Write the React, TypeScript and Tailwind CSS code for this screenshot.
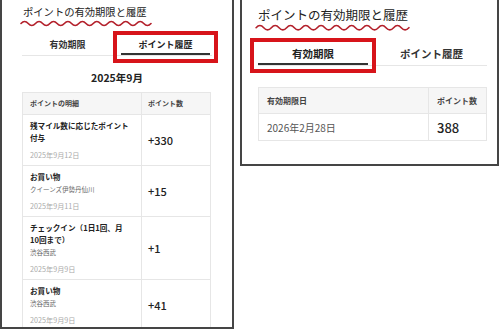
const font = "font-['Noto_Sans_CJK_JP','Noto_Sans',sans-serif]";

const Wave = ({ width, periods, amp }: { width: number; periods: number; amp: number }) => {
  const p = (width - 2) / periods;
  let d = `M1 ${amp + 1.5}`;
  for (let i = 0; i < periods; i++) {
    d += ` q${p / 4} ${-amp * 2} ${p / 2} 0 q${p / 4} ${amp * 2} ${p / 2} 0`;
  }
  return (
    <svg width={width} height={amp * 2 + 3} viewBox={`0 0 ${width} ${amp * 2 + 3}`} className="block">
      <path d={d} fill="none" stroke="#b3202b" strokeWidth="1.6" strokeLinecap="round" />
    </svg>
  );
};

type Entry = { title: string[]; shop?: string; date: string; pts: string };

const history: Entry[] = [
  { title: ["残マイル数に応じたポイント", "付与"], date: "2025年9月12日", pts: "+330" },
  { title: ["お買い物"], shop: "クイーンズ伊勢丹仙川", date: "2025年9月11日", pts: "+15" },
  { title: ["チェックイン（1日1回、月", "10回まで）"], shop: "渋谷西武", date: "2025年9月9日", pts: "+1" },
  { title: ["お買い物"], shop: "渋谷西武", date: "2025年9月9日", pts: "+41" },
];

const HistoryPanel = () => (
  <div className="w-[234px] h-[329px] shrink-0 border-x-2 border-b-2 border-[#454545] overflow-hidden bg-white">
    <div className="pl-[21px] pt-[5px] text-[10.3px] leading-[14px] text-[#222]">ポイントの有効期限と履歴</div>
    <div className="ml-[18px] mt-[1px]">
      <Wave width={132} periods={9} amp={2} />
    </div>

    <div className="ml-[20px] mt-[4px] w-[190px] flex items-end border-b border-[#e6e6e6]">
      <div className="flex-1 pr-[8px] pt-[8px] pb-[4px] text-center text-[9px] leading-[12px] font-bold text-[#333]">
        有効期限
      </div>
      <div className="w-[89px] mr-[2px] pb-[2px] text-center text-[9px] leading-[12px] font-bold text-[#222] border-b-2 border-[#333] outline-[4px] outline-solid outline-[#d7141a] outline-offset-[4px]">
        ポイント履歴
      </div>
    </div>

    <div className="mt-[15px] text-center text-[10.5px] leading-[14px] font-bold text-[#222]">2025年9月</div>

    <div className="mx-[20px] mt-[7px] w-[189px] border border-[#e6e6e6]">
      <div className="flex h-[22px] bg-[#f6f6f6] border-b border-[#e6e6e6] text-[7px] font-bold text-[#444]">
        <div className="w-[119px] pl-[7px] flex items-center border-r border-[#e6e6e6]">ポイントの明細</div>
        <div className="flex-1 pl-[6px] flex items-center">ポイント数</div>
      </div>
      {history.map((h, i) => (
        <div key={i} className="flex border-b border-[#e6e6e6]">
          <div className="w-[119px] pl-[7px] pt-[5px] pb-[4px] border-r border-[#e6e6e6]">
            {h.title.map((t) => (
              <div key={t} className="text-[7.6px] leading-[12px] font-bold text-[#222] whitespace-nowrap">
                {t}
              </div>
            ))}
            {h.shop && <div className="text-[6.5px] leading-[12px] text-[#666]">{h.shop}</div>}
            <div className="mt-[5px] text-[7.2px] leading-[12px] text-[#aaa]">{h.date}</div>
          </div>
          <div className="flex-1 pl-[6px] flex items-center text-[11px] font-medium text-[#222]">{h.pts}</div>
        </div>
      ))}
    </div>
  </div>
);

const ExpiryPanel = () => (
  <div className="ml-[6px] w-[259px] h-[166px] shrink-0 border-x-2 border-b-2 border-[#454545] bg-white">
    <div className="pl-[16px] pt-[6px] text-[12.5px] leading-[18px] text-[#222]">ポイントの有効期限と履歴</div>
    <div className="ml-[13px]">
      <Wave width={155} periods={10} amp={2.2} />
    </div>

    <div className="ml-[16px] mt-[15px] w-[229px] flex items-end border-b border-[#e6e6e6]">
      <div className="w-[110px] pt-[1px] pb-[2px] text-center text-[10.5px] leading-[14px] font-bold text-[#222] border-b-2 border-[#333] outline-[4px] outline-solid outline-[#d7141a] outline-offset-[4px]">
        有効期限
      </div>
      <div className="flex-1 pl-[8px] pt-[1px] pb-[4px] text-center text-[10.5px] leading-[14px] font-bold text-[#333]">
        ポイント履歴
      </div>
    </div>

    <div className="ml-[16px] mt-[21px] w-[229px] border border-[#e6e6e6]">
      <div className="flex h-[26px] bg-[#f6f6f6] border-b border-[#e6e6e6] text-[8px] font-bold text-[#444]">
        <div className="w-[170px] pl-[8px] flex items-center border-r border-[#e6e6e6]">有効期限日</div>
        <div className="flex-1 pl-[8px] flex items-center">ポイント数</div>
      </div>
      <div className="flex h-[26px]">
        <div className="w-[170px] pl-[8px] flex items-center border-r border-[#e6e6e6] text-[10px] text-[#555]">
          2026年2月28日
        </div>
        <div className="flex-1 pl-[8px] flex items-center text-[13px] font-medium text-[#222]">388</div>
      </div>
    </div>
  </div>
);

export default function App() {
  return (
    <div className={`w-[500px] h-[331px] bg-white flex items-start overflow-hidden ${font}`}>
      <HistoryPanel />
      <ExpiryPanel />
    </div>
  );
}
